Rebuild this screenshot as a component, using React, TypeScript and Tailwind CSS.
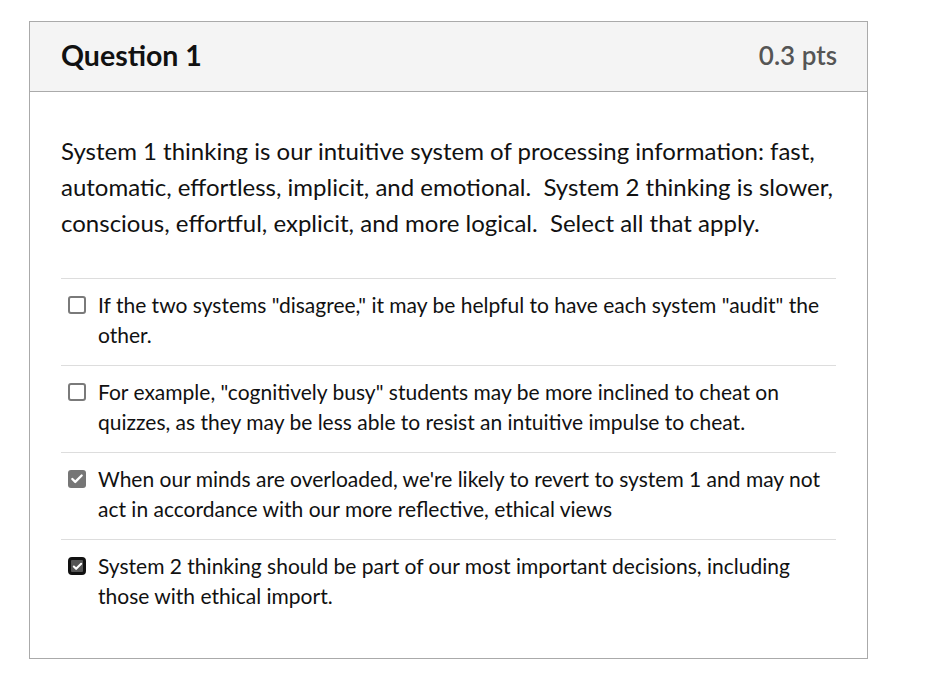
import { Check } from 'lucide-react'

type Answer = { text: string; state: 'empty' | 'checked' | 'focused' }

const answers: Answer[] = [
  {
    text: 'If the two systems "disagree," it may be helpful to have each system "audit" the other.',
    state: 'empty',
  },
  {
    text: 'For example, "cognitively busy" students may be more inclined to cheat on quizzes, as they may be less able to resist an intuitive impulse to cheat.',
    state: 'empty',
  },
  {
    text: "When our minds are overloaded, we're likely to revert to system 1 and may not act in accordance with our more reflective, ethical views",
    state: 'checked',
  },
  {
    text: 'System 2 thinking should be part of our most important decisions, including those with ethical import.',
    state: 'focused',
  },
]

function Box({ state }: { state: Answer['state'] }) {
  if (state === 'empty') {
    return <span className="block w-[18px] h-[18px] rounded-[3px] border-2 border-[#7a7a7a] bg-white" />
  }
  if (state === 'checked') {
    return (
      <span className="flex items-center justify-center w-[18px] h-[18px] rounded-[3px] bg-[#767676]">
        <Check className="w-[14px] h-[14px] text-white" strokeWidth={4} />
      </span>
    )
  }
  return (
    <span className="flex items-center justify-center w-[18px] h-[18px] rounded-[4px] border-[3px] border-[#111] bg-[#555]">
      <Check className="w-[11px] h-[11px] text-white" strokeWidth={4.5} />
    </span>
  )
}

export default function App() {
  return (
    <div className="min-h-screen bg-white pt-[21px] pl-[29px] font-['Lato','Noto_Sans',sans-serif]">
      <div className="w-[839px] border border-[#aaaaaa] bg-white">
        {/* Header */}
        <div className="h-[70px] bg-[#f4f4f4] border-b border-[#aaaaaa] flex items-center justify-between pl-[31px] pr-[30px] pb-[3px]">
          <h2 className="text-[28.5px] font-bold text-[#111] leading-none">Question 1</h2>
          <span className="text-[26px] font-semibold text-[#555] leading-none">0.3 pts</span>
        </div>

        {/* Body */}
        <div className="px-[31px] pt-[41px] pb-[47px]">
          <p className="text-[24px] leading-[36px] text-[#111]">
            System 1 thinking is our intuitive system of processing information: fast, automatic, effortless,
            implicit, and emotional.&nbsp; System 2 thinking is slower, conscious, effortful, explicit, and more
            logical.&nbsp; Select all that apply.
          </p>

          <div className="mt-[37px] w-[775px]">
            {answers.map((a, i) => (
              <div
                key={i}
                className={`border-t border-[#dddddd] pt-[11px] ${i === answers.length - 1 ? 'pb-0' : 'pb-[15px]'}`}
              >
                <div className="flex items-start">
                  <div className="w-[37px] pl-[7px] pt-[6px] shrink-0">
                    <Box state={a.state} />
                  </div>
                  <span className="text-[21px] leading-[30px] text-[#111]">{a.text}</span>
                </div>
              </div>
            ))}
          </div>
        </div>
      </div>
    </div>
  )
}
